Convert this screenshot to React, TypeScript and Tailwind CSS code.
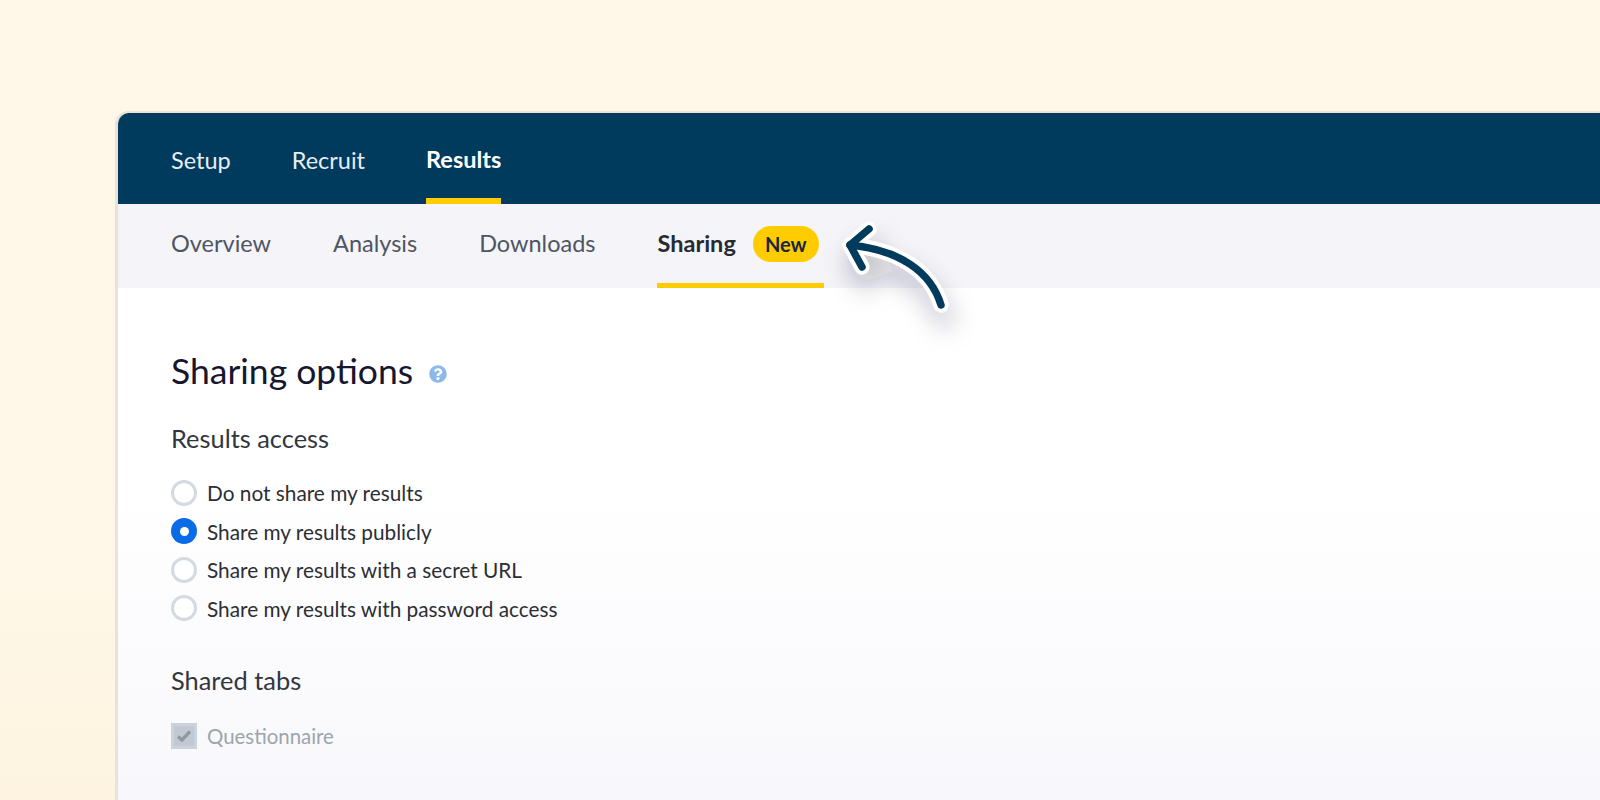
import { FaQuestionCircle } from 'react-icons/fa';

const topTabs = ['Setup', 'Recruit', 'Results'];
const subTabs = ['Overview', 'Analysis', 'Downloads'];
const accessOptions = [
  { label: 'Do not share my results', checked: false },
  { label: 'Share my results publicly', checked: true },
  { label: 'Share my results with a secret URL', checked: false },
  { label: 'Share my results with password access', checked: false },
];

function Radio({ checked }: { checked: boolean }) {
  if (checked) {
    return (
      <span className="flex h-[26px] w-[26px] shrink-0 items-center justify-center rounded-full bg-[#0a6be8]">
        <span className="h-[9px] w-[9px] rounded-full bg-white" />
      </span>
    );
  }
  return <span className="h-[26px] w-[26px] shrink-0 rounded-full border-[3px] border-[#d5dae2] bg-white" />;
}

function CurvedArrow() {
  const line = 'M941 305 C931 272 900 250 850 245';
  const head = 'M869 229 L850 245 L862 267';
  return (
    <svg className="pointer-events-none absolute left-0 top-0" width="1600" height="800" viewBox="0 0 1600 800" fill="none">
      <defs>
        <filter id="arrow-shadow" x="-80%" y="-80%" width="260%" height="260%">
          <feDropShadow dx="4" dy="16" stdDeviation="12" floodColor="#1d2433" floodOpacity="0.26" />
        </filter>
      </defs>
      <g strokeLinecap="round" strokeLinejoin="round" filter="url(#arrow-shadow)">
        <path d={line} stroke="#ffffff" strokeWidth="15" />
        <path d={head} stroke="#ffffff" strokeWidth="15" />
      </g>
      <g strokeLinecap="round" strokeLinejoin="round">
        <path d={line} stroke="#003a5d" strokeWidth="7.5" />
        <path d={head} stroke="#003a5d" strokeWidth="7.5" />
      </g>
    </svg>
  );
}

export default function App() {
  return (
    <div className="relative h-[800px] overflow-hidden bg-gradient-to-b from-[#fff8e8] from-70% to-[#fdf3e0] pl-[115px] pt-[111px] font-['Lato',sans-serif]">
      <div className="h-[689px] overflow-hidden rounded-tl-[14px] border-l-[3px] border-t-2 border-[#e9e2d6]">
        {/* Main nav */}
        <nav className="flex h-[91px] gap-[61px] bg-[#003a5d] pl-[53px]">
          {topTabs.map((tab) => (
            <div
              key={tab}
              className={
                tab === 'Results'
                  ? 'flex h-full items-center border-b-[6px] border-[#ffcc00] pt-[8px] text-[23.5px] font-bold text-white'
                  : 'flex h-full items-center pt-[4px] text-[23.5px] text-[#e8edf1]'
              }
            >
              {tab}
            </div>
          ))}
        </nav>

        {/* Sub nav */}
        <div className="flex h-[84px] gap-[62px] bg-[#f4f4f9] pl-[53px]">
          {subTabs.map((tab) => (
            <div key={tab} className="flex items-center pb-[4px] text-[23.5px] text-[#4f5562]">
              {tab}
            </div>
          ))}
          <div className="flex w-[167px] items-center gap-[17px] border-b-[5px] border-[#ffcc00] pt-[1px]">
            <span className="text-[23.5px] font-bold text-[#272a33]">Sharing</span>
            <span className="flex h-[36px] w-[66px] items-center justify-center rounded-full bg-[#ffcc00] text-[20px] font-bold text-[#1c2540]">
              New
            </span>
          </div>
        </div>

        {/* Content */}
        <div className="h-[512px] bg-gradient-to-b from-white from-40% to-[#f8f7fb] pl-[53px] pt-[61px]">
          <div className="flex items-center gap-[16px]">
            <h1 className="text-[35.5px] leading-[44px] text-[#16172e]">Sharing options</h1>
            <FaQuestionCircle className="mt-[6px] text-[18px] text-[#8bb9e8]" />
          </div>

          <h2 className="mt-[29px] text-[25.4px] leading-[32px] text-[#33363d]">Results access</h2>
          <div className="mt-[26px] flex flex-col gap-[12.4px]">
            {accessOptions.map((option) => (
              <label key={option.label} className="flex h-[26px] items-center gap-[10px] text-[20.8px] text-[#2c2e35]">
                <Radio checked={option.checked} />
                {option.label}
              </label>
            ))}
          </div>

          <h2 className="mt-[43px] text-[25.4px] leading-[32px] text-[#33363d]">Shared tabs</h2>
          <label className="mt-[27px] flex h-[26px] items-center gap-[10px] text-[20.4px] text-[#9aa6ab]">
            <span className="flex h-[26px] w-[26px] items-center justify-center border-[3px] border-[#ccd2da] bg-[#c3c9d2]">
              <svg width="16" height="14" viewBox="0 0 16 14" fill="none">
                <path d="M2 7.5 L6 11 L14 2.5" stroke="#8f98a3" strokeWidth="3.4" />
              </svg>
            </span>
            Questionnaire
          </label>
        </div>
      </div>
      <CurvedArrow />
    </div>
  );
}
